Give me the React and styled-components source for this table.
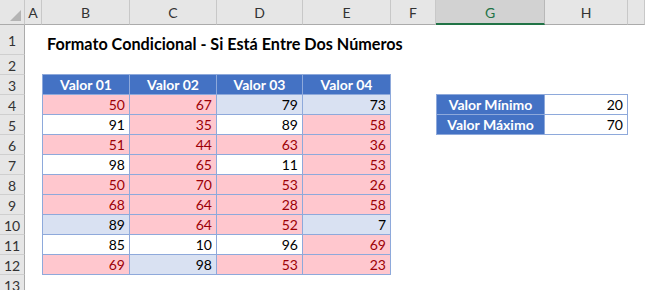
import React from 'react';
import styled, { createGlobalStyle } from 'styled-components';

const GlobalStyle = createGlobalStyle`
  html, body { margin: 0; padding: 0; background: #ffffff; overflow: hidden; }
  body { font-family: Lato, 'Open Sans', sans-serif; }
`;

const letters = ['A', 'B', 'C', 'D', 'E', 'F', 'G', 'H', ''];

const values = [
  [50, 67, 79, 73],
  [91, 35, 89, 58],
  [51, 44, 63, 36],
  [98, 65, 11, 53],
  [50, 70, 53, 26],
  [68, 64, 28, 58],
  [89, 64, 52, 7],
  [85, 10, 96, 69],
  [69, 98, 53, 23],
];

const limits = [
  ['Valor Mínimo', 20],
  ['Valor Máximo', 70],
];

const MIN = 20;
const MAX = 70;

export default function App() {
  return (
    <>
      <GlobalStyle />
      <Sheet>
        <Corner>
          <svg width="11" height="11" viewBox="0 0 11 11">
            <polygon points="11,0 11,11 0,11" fill="#b4b4b4" />
          </svg>
        </Corner>
        {letters.map((l, i) => (
          <ColHead key={i} $active={l === 'G'}>{l}</ColHead>
        ))}

        <RowHead>1</RowHead>
        <Blank />
        <Title>Formato Condicional - Si Está Entre Dos Números</Title>
        <Blank />

        <RowHead>2</RowHead>
        {Array.from({ length: 9 }).map((_, i) => <Blank key={i} />)}

        <RowHead>3</RowHead>
        <Blank />
        {['Valor 01', 'Valor 02', 'Valor 03', 'Valor 04'].map((t, i) => (
          <Cell key={t} $kind="head" $first={i === 0} $top>{t}</Cell>
        ))}
        <Blank />
        <Blank />
        <Blank />
        <Blank />

        {values.map((row, i) => {
          const limit = limits[i];
          return (
            <React.Fragment key={i}>
              <RowHead>{i + 4}</RowHead>
              <Blank />
              {row.map((v, j) => {
                const hit = v >= MIN && v <= MAX;
                const kind = hit ? 'hit' : i % 2 === 0 ? 'band' : 'plain';
                return (
                  <Cell key={j} $kind={kind} $first={j === 0} $num>{v}</Cell>
                );
              })}
              <Blank />
              {limit ? (
                <>
                  <Cell $kind="head" $first $top={i === 0}>{limit[0]}</Cell>
                  <Cell $kind="plain" $top={i === 0} $num>{limit[1]}</Cell>
                </>
              ) : (
                <>
                  <Blank />
                  <Blank />
                </>
              )}
              <Blank />
            </React.Fragment>
          );
        })}

        <RowHead>13</RowHead>
        {Array.from({ length: 9 }).map((_, i) => <Blank key={i} />)}
      </Sheet>
    </>
  );
}

const Sheet = styled.div`
display: grid;
grid-template-columns: 25px 17px 88px 87px 86px 88px 45px 109px 83px 1fr;
grid-template-rows: 25px 30px repeat(12, 20px);
width: 645px;
height: 290px;
overflow: hidden;
font-size: 14px;
color: #000000;
`

const Corner = styled.div`
background: #e6e6e6;
border-right: 1px solid #c8c8c8;
border-bottom: 1px solid #ababab;
box-sizing: border-box;
display: flex;
align-items: flex-end;
justify-content: flex-end;
padding: 0 3px 3px 0;
`

const ColHead = styled.div`
background: ${p => (p.$active ? '#d2d2d2' : '#e6e6e6')};
color: ${p => (p.$active ? '#217346' : '#333333')};
border-right: 1px solid ${p => (p.$active ? '#b8b8b8' : '#c8c8c8')};
border-bottom: ${p => (p.$active ? '2px solid #217346' : '1px solid #ababab')};
box-sizing: border-box;
display: flex;
align-items: center;
justify-content: center;
font-size: 14px;
padding-top: 1px;
`

const RowHead = styled.div`
background: #e6e6e6;
color: #333333;
border-right: 1px solid #ababab;
border-bottom: 1px solid #cfcfcf;
box-sizing: border-box;
display: flex;
align-items: center;
justify-content: center;
font-size: 14px;
padding-top: 2px;
`

const Blank = styled.div``

const Title = styled.div`
grid-column: span 7;
align-self: end;
padding: 0 0 2px 5px;
font-size: 16.2px;
font-weight: 700;
white-space: nowrap;
color: #000000;
`

const fills = {
  head: '#4472c4',
  hit: '#ffc7ce',
  band: '#d9e1f2',
  plain: '#ffffff',
};

const inks = {
  head: '#ffffff',
  hit: '#9c0006',
  band: '#000000',
  plain: '#000000',
};

const Cell = styled.div`
background: ${p => fills[p.$kind]};
color: ${p => inks[p.$kind]};
font-weight: ${p => (p.$kind === 'head' ? 700 : 400)};
border-right: 1px solid #8ea9db;
border-bottom: 1px solid #8ea9db;
border-left: ${p => (p.$first ? '1px solid #8ea9db' : 'none')};
border-top: ${p => (p.$top ? '1px solid #8ea9db' : 'none')};
margin-top: ${p => (p.$top ? '-1px' : '0')};
box-sizing: border-box;
display: flex;
align-items: flex-end;
justify-content: ${p => (p.$num ? 'flex-end' : 'center')};
padding: 0 ${p => (p.$num ? '4px' : '0')} 1px 0;
white-space: nowrap;
overflow: hidden;
`
